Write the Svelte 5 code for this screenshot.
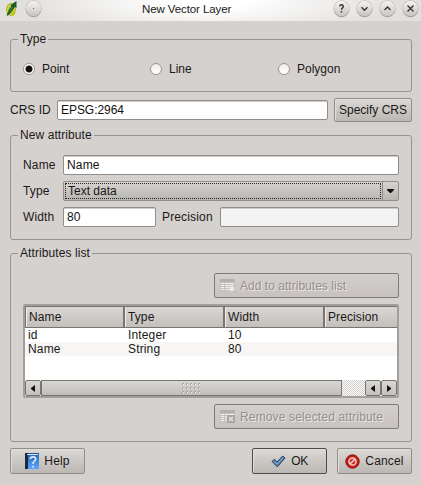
<script>
  const columns = ['Name', 'Type', 'Width', 'Precision'];
  const rows = [
    ['id', 'Integer', '10', ''],
    ['Name', 'String', '80', '']
  ];
  let kind = $state('Point');
</script>

{#snippet tableIcon(remove)}
  <svg class="ticon" width="16" height="14" viewBox="0 0 16 14">
    <rect x="0" y="0" width="15" height="13" fill="#c5c3c1" />
    <rect x="0" y="0" width="15" height="3" fill="#b3b1af" />
    <path d="M1 4.5h3M5 4.5h9M1 6.5h3M5 6.5h9M1 8.5h3M5 8.5h9M1 10.5h3M5 10.5h6" stroke="#efeeed" />
    {#if remove}
      <rect x="7" y="5" width="8" height="8" fill="#a8a6a4" />
      <path d="M9 7l4 4M13 7l-4 4" stroke="#e8e6e4" stroke-width="1.3" />
    {:else}
      <path d="M12 7v6M9 10h6M10 8l4 4M14 8l-4 4" stroke="#f0efee" />
      <path d="M13 12.5h2" stroke="#aaa8a6" />
    {/if}
  </svg>
{/snippet}

<div class="window">
  <header>
    <svg class="logo" width="12" height="16" viewBox="0 0 12 16">
      <ellipse cx="5" cy="8.5" rx="3.2" ry="4.8" fill="none" stroke="#8d9818" stroke-width="3" />
      <ellipse cx="5" cy="8.5" rx="3.2" ry="4.6" fill="none" stroke="#d9df20" stroke-width="1.8" />
      <path d="M6 10l2.5 4" stroke="#c9c51c" stroke-width="2.4" />
      <path d="M0.5 14.5L3 8.5 5.5 5 4.5 4 10.5 0V7L9 6 5 11.5 2 14.5Z" fill="#1c5c23" />
      <path d="M3 11.5L7 6" stroke="#4b8b3f" />
    </svg>
    <span class="round menu"><i></i></span>
    <h1>New Vector Layer</h1>
    <div class="controls">
      <span class="round"><svg width="15" height="15" viewBox="0 0 15 15"><path d="M5.7 5.4Q5.8 3.8 7.5 3.8T9.3 5.4Q9.3 6.3 8.2 7.1Q7.5 7.7 7.5 8.8M7.5 10v1.5" stroke-width="1.2" /></svg></span>
      <span class="round"><svg width="15" height="15" viewBox="0 0 15 15"><path d="M4.5 6.3l3 3 3-3" /></svg></span>
      <span class="round"><svg width="15" height="15" viewBox="0 0 15 15"><path d="M4.5 9l3-3 3 3" /></svg></span>
      <span class="round"><svg width="15" height="15" viewBox="0 0 15 15"><path d="M4.5 4.5l6 6M10.5 4.5l-6 6" /></svg></span>
    </div>
  </header>

  <main>
    <section class="group type">
      <h2>Type</h2>
      {#each ['Point', 'Line', 'Polygon'] as option}
        <label class="radio"><button class="dot" class:on={kind === option} aria-label={option} onclick={() => (kind = option)}></button><span>{option}</span></label>
      {/each}
    </section>

    <div class="crs">
      <span class="label">CRS ID</span>
      <div class="input grow code">EPSG:2964</div>
      <button class="btn specify">Specify CRS</button>
    </div>

    <section class="group attribute">
      <h2>New attribute</h2>
      <div class="line">
        <span class="label">Name</span>
        <div class="input grow">Name</div>
      </div>
      <div class="line">
        <span class="label">Type</span>
        <div class="combo">
          <div class="value">Text data</div>
          <div class="arrow"><svg width="7" height="4" viewBox="0 0 7 4"><path d="M0 0H7V1L4 4H3L0 1Z" fill="#111" /></svg></div>
        </div>
      </div>
      <div class="line">
        <span class="label wide">Width</span>
        <div class="input small">80</div>
        <span class="label precision">Precision</span>
        <div class="input grow off"></div>
      </div>
    </section>

    <section class="group list">
      <h2>Attributes list</h2>
      <button class="btn disabled add">{@render tableIcon(false)}<span>Add to attributes list</span></button>
      <div class="table">
        <div class="thead">
          {#each columns as c}<div class="th">{c}</div>{/each}
        </div>
        <div class="tbody">
          {#each rows as row}
            <div class="tr">{#each row as cell}<div class="td">{cell}</div>{/each}</div>
          {/each}
        </div>
        <div class="scroll">
          <div class="sb"><svg width="4" height="7" viewBox="0 0 4 7"><path d="M4 0V7L0 4V3Z" fill="#111" /></svg></div>
          <div class="thumb">
            <svg width="19" height="11" viewBox="0 0 19 11">
              {#each [0, 4, 8] as y}{#each [0, 4, 8, 12, 16] as x}
                <rect {x} {y} width="2" height="2" fill="#f3f2f1" /><path d="M{x + 0.5} {y + 2}V{y + 0.5}H{x + 2}" stroke="#a09e9b" fill="none" />
              {/each}{/each}
            </svg>
          </div>
          <div class="trough"></div>
          <div class="sb"><svg width="4" height="7" viewBox="0 0 4 7"><path d="M4 0V7L0 4V3Z" fill="#111" /></svg></div>
          <div class="sb"><svg width="4" height="7" viewBox="0 0 4 7"><path d="M0 0V7L4 4V3Z" fill="#111" /></svg></div>
        </div>
      </div>
      <button class="btn disabled remove">{@render tableIcon(true)}<span>Remove selected attribute</span></button>
    </section>

    <footer>
      <button class="btn help">
        <svg width="14" height="16" viewBox="0 0 14 16">
          <defs><linearGradient id="book" x2="0" y2="1"><stop offset="0" stop-color="#2767b3" /><stop offset="1" stop-color="#5fa8ff" /></linearGradient></defs>
          <rect width="14" height="16" fill="#245391" />
          <rect x="3" y="1" width="11" height="15" fill="url(#book)" />
          <rect width="3" height="16" fill="#17293d" />
          <path d="M2 1.5H13" stroke="#d8e6f3" />
          <path d="M5.3 6Q5.5 3.8 8 3.8T10.7 6Q10.7 7.4 9.2 8.4Q8 9.2 8 11M8 12.7v1.8" fill="none" stroke="#dcecff" stroke-width="1.7" />
        </svg>
        <span>Help</span>
      </button>
      <button class="btn ok">
        <svg width="15" height="13" viewBox="0 0 15 13"><path d="M1 6.5L3.5 4.2 6 7 11.7 1 14 3 6.3 11.8Z" fill="#5d83ad" stroke="#263f5e" stroke-linejoin="round" /><path d="M2.5 6.3L6 9 12 2.7" stroke="#86a8cb" fill="none" /></svg>
        <span>OK</span>
      </button>
      <button class="btn cancel">
        <svg width="15" height="15" viewBox="0 0 15 15"><circle cx="7.5" cy="7.5" r="6.7" fill="#c51a16" stroke="#911410" /><circle cx="7.5" cy="7.5" r="3.6" fill="#d42a24" stroke="#ead5d2" stroke-width="1.5" /><path d="M5 10l5-5" stroke="#ead5d2" stroke-width="1.6" /></svg>
        <span>Cancel</span>
      </button>
    </footer>
  </main>
</div>

<style>
  :global(body) { margin: 0; }
  * { box-sizing: border-box; }
  .window {
    width: 421px; height: 485px; overflow: hidden;
    background: #d5d1ce; color: #1b1918;
    font: 12px/14px "Liberation Sans", Arial, sans-serif;
    letter-spacing: 0.15px; white-space: nowrap;
  }
  h1, h2 { margin: 0; font: inherit; }
  svg { display: block; flex: none; }
  button { font: inherit; letter-spacing: inherit; color: inherit; padding: 0; margin: 0; }
  header {
    height: 21px; display: flex; align-items: flex-start; padding-left: 6px;
    background: radial-gradient(ellipse 190px 40px at 50% 0, #fff 0 20%, #e2e0de 100%);
  }
  .logo { margin-top: 1px; }
  .round {
    width: 15px; height: 15px; border-radius: 50%; flex: none;
    background: linear-gradient(#f5f4f3, #c7c5c2);
    box-shadow: 0 0 0 0.5px #aaa7a4, 0 1px 1px #8d8a87;
  }
  .round path { fill: none; stroke: #373533; stroke-width: 1.4; }
  .menu { margin: 1px 0 0 8px; display: grid; place-items: center; }
  .menu i { width: 1px; height: 1px; background: #666; }
  h1 { margin: 2px 0 0 101px; font-size: 11.5px; letter-spacing: -0.1px; }
  .controls { display: flex; gap: 8px; margin: 1px 3px 0 auto; }
  main { padding: 18px 9px 0 10px; }
  .group { border: 1px solid #969390; border-radius: 3px; }
  h2 { width: max-content; background: #d5d1ce; padding: 0 2px; margin-left: 7px; height: 14px; letter-spacing: 0.08px; }
  .type { height: 53px; display: grid; grid-template-columns: 127px 128px 1fr; grid-template-rows: 6px 1fr; padding-left: 12px; }
  .type h2 { grid-column: 1 / 4; margin: -8px 0 0 -5px; }
  .radio { display: flex; align-items: center; gap: 7px; height: 14px; margin-top: 16px; }
  .radio span { letter-spacing: 0; }
  .dot { width: 12px; height: 12px; border: 1px solid #999693; border-radius: 50%; background: linear-gradient(#eee, #fff); }
  .dot.on { background: radial-gradient(circle, #111 0 3px, #fff 4px); }
  .crs { display: flex; align-items: center; height: 24px; margin-top: 6px; }
  .crs .label { width: 47px; letter-spacing: 0; }
  .grow { flex: 1; }
  .input { height: 20px; border: 1px solid #908d8a; border-radius: 2px; background: #fff; padding: 2px 3px; box-shadow: inset 0 1px #ccc; color: #111; }
  .code { letter-spacing: -0.05px; }
  .off { background: #f3f3f3; }
  .btn {
    display: flex; align-items: center; border: 1px solid #918e8a; border-radius: 2px;
    background: linear-gradient(#dbd8d5, #bbb8b4); box-shadow: inset 1px 1px #e1dfdc;
  }
  .specify { width: 78px; height: 24px; margin-left: 6px; justify-content: center; letter-spacing: 0; }
  .attribute { height: 105px; margin-top: 13px; padding: 0 12px; }
  .attribute h2, .list h2 { margin: -8px 0 13px -5px; }
  .line { display: flex; align-items: center; height: 20px; margin-bottom: 6px; }
  .line .label { width: 40px; }
  .small { width: 93px; }
  .line .precision { width: 64px; padding-left: 6px; }
  .combo { flex: 1; height: 20px; display: flex; border: 1px solid #908d8a; border-radius: 2px; background: linear-gradient(#d6d3d0, #b8b6b1); }
  .value { flex: 1; margin: 1px; border: 1px dotted #222; padding: 0 2px; line-height: 14px; letter-spacing: 0; }
  .arrow { width: 16px; border-left: 1px solid #908d8a; display: grid; place-items: center; }
  .list { height: 189px; margin-top: 13px; padding: 0 12px; }
  .disabled { width: 185px; height: 25px; margin-left: auto; padding-left: 5px; gap: 4px; color: #93908d; text-shadow: 1px 1px #ece9e7; border-color: #7d7a77; background: linear-gradient(#d4d0cd, #c7c2bf); box-shadow: none; }
  .add { letter-spacing: 0.03px; }
  .table { height: 94px; margin: 6px 0; border: 2px solid #a19e9b; border-radius: 2px; display: flex; flex-direction: column; background: #fff; }
  .thead { display: grid; grid-template-columns: 100px 100px 100px 1fr; height: 22px; border: 1px solid #777471; background: linear-gradient(#d9d6d3, #c3c0bc); border-right: 0; }
  .th { padding: 3px 0 0 2px; border-left: 1px solid #eee; border-right: 2px solid #777471; letter-spacing: 0.1px; }
  .th:last-child { border-right: 0; }
  .thead { grid-template-columns: 99px 100px 100px 1fr; }
  .tbody { flex: 1; }
  .tr { display: grid; grid-template-columns: 100px 100px 100px 1fr; height: 14px; }
  .tr:nth-child(even) { background: #f7f6f5; }
  .td { padding-left: 3px; }
  .scroll { display: flex; height: 16px; }
  .sb { width: 16px; border: 1px solid #777471; border-radius: 2px; background: linear-gradient(#d9d6d3, #c4c2be); display: grid; place-items: center; }
  .thumb { width: 301px; border: 1px solid #777471; background: linear-gradient(#d9d7d4, #bfbfb9); display: grid; place-items: center; }
  .trough { flex: 1; background: repeating-conic-gradient(#fff 0 25%, #cfccc9 0 50%) 0 0 / 2px 2px; }
  footer { display: flex; margin-top: 6px; }
  footer .btn { width: 75px; height: 26px; justify-content: center; gap: 5px; }
  .ok { margin: 0 10px 0 auto; border-color: #4d4a48; letter-spacing: -0.3px; }
</style>
